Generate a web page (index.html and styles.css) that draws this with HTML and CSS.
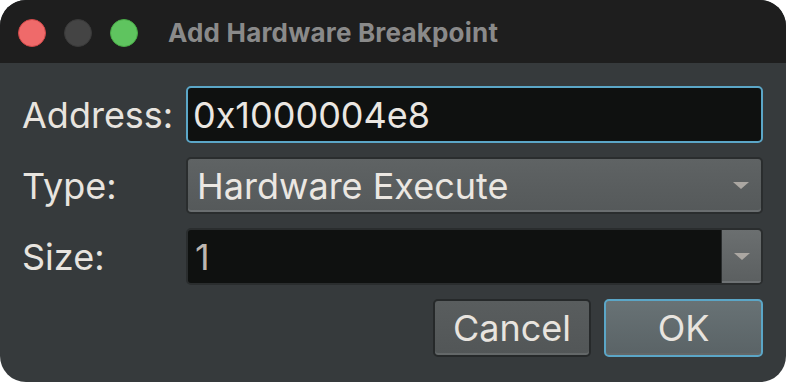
FILE: index.html
```html
<!DOCTYPE html>
<html>
<head>
<meta charset="utf-8">
<link rel="stylesheet" href="styles.css">
</head>
<body>
<div class="window">
  <div class="titlebar">
    <div class="lights">
      <span class="light red"></span>
      <span class="light grey"></span>
      <span class="light green"></span>
    </div>
    <div class="title">Add Hardware Breakpoint</div>
  </div>
  <div class="content">
    <div class="label">Address:</div>
    <div class="input focused">0x1000004e8</div>
    <div class="label">Type:</div>
    <div class="combo">
      <span class="combo-text">Hardware Execute</span>
      <span class="arrow"></span>
    </div>
    <div class="label">Size:</div>
    <div class="editcombo">
      <span class="edit-text">1</span>
      <span class="drop"><span class="arrow"></span></span>
    </div>
    <div class="buttons">
      <button class="btn">Cancel</button>
      <button class="btn default">OK</button>
    </div>
  </div>
</div>
</body>
</html>
```
FILE: styles.css
```css
html, body {
  margin: 0;
  padding: 0;
  background: #ffffff;
}
body {
  font-family: Inter, "Noto Sans", sans-serif;
}
.window {
  width: 786px;
  height: 382px;
  border-radius: 26px;
  overflow: hidden;
  background: #363a3c;
}
.titlebar {
  height: 63px;
  background: #1e1e1e;
  display: flex;
  align-items: center;
  padding-left: 18px;
  box-sizing: border-box;
}
.lights {
  display: flex;
  gap: 18px;
  margin-top: 2px;
}
.light {
  width: 28px;
  height: 28px;
  border-radius: 50%;
  box-sizing: border-box;
}
.red { background: #ef6a6a; border: 1px solid #d04848; }
.grey { background: #444444; border: 1px solid #3a3a3a; }
.green { background: #5fc45f; border: 1px solid #48aa46; }
.title {
  margin-left: 30px;
  font-size: 26px;
  font-weight: 700;
  color: #8a8a8a;
  letter-spacing: 0.2px;
  margin-top: 2px;
}
.content {
  display: grid;
  grid-template-columns: 164px 577px;
  grid-auto-rows: 57px;
  row-gap: 14px;
  padding: 23px 0 0 22px;
}
.label {
  color: #e8e4df;
  font-size: 36px;
  display: flex;
  align-items: center;
}
.input {
  box-sizing: border-box;
  background: #0f1110;
  border: 2px solid #5ba6c7;
  border-radius: 5px;
  color: #ebe7e2;
  font-size: 36px;
  display: flex;
  align-items: center;
  padding-left: 5px;
}
.combo {
  box-sizing: border-box;
  background: linear-gradient(#5f6364, #55595a);
  border: 2px solid #2a2d2e;
  border-radius: 5px;
  box-shadow: inset 0 -2px 0 #6a6e70;
  color: #ebe7e2;
  font-size: 36px;
  display: flex;
  align-items: center;
  justify-content: space-between;
  padding: 0 12px 0 9px;
}
.arrow {
  width: 0;
  height: 0;
  border-left: 8px solid transparent;
  border-right: 8px solid transparent;
  border-top: 7px solid #aba7a2;
}
.editcombo {
  box-sizing: border-box;
  border: 2px solid #2a2d2e;
  border-radius: 5px;
  display: flex;
  overflow: hidden;
  background: #0f1110;
}
.edit-text {
  flex: 1;
  display: flex;
  align-items: center;
  padding-left: 7px;
  color: #bdb6b0;
  font-size: 36px;
}
.drop {
  width: 39px;
  background: linear-gradient(#6b6f70, #5b5f60);
  border-left: 1px solid #2a2d2e;
  box-shadow: inset 0 -2px 0 #6e7274;
  display: flex;
  align-items: center;
  justify-content: center;
}
.buttons {
  grid-column: 1 / 3;
  display: flex;
  justify-content: flex-end;
  gap: 13px;
}
.btn {
  box-sizing: border-box;
  width: 158px;
  height: 58px;
  border: 2px solid #26292a;
  border-radius: 5px;
  background: linear-gradient(#595d5e, #525657);
  box-shadow: inset 0 -2px 0 #646869;
  color: #e8e4df;
  font-family: Inter, "Noto Sans", sans-serif;
  font-size: 36px;
  padding: 0;
}
.btn.default {
  width: 159px;
  border-color: #5ba6c7;
  background: linear-gradient(#687275, #5a6366);
}
```
